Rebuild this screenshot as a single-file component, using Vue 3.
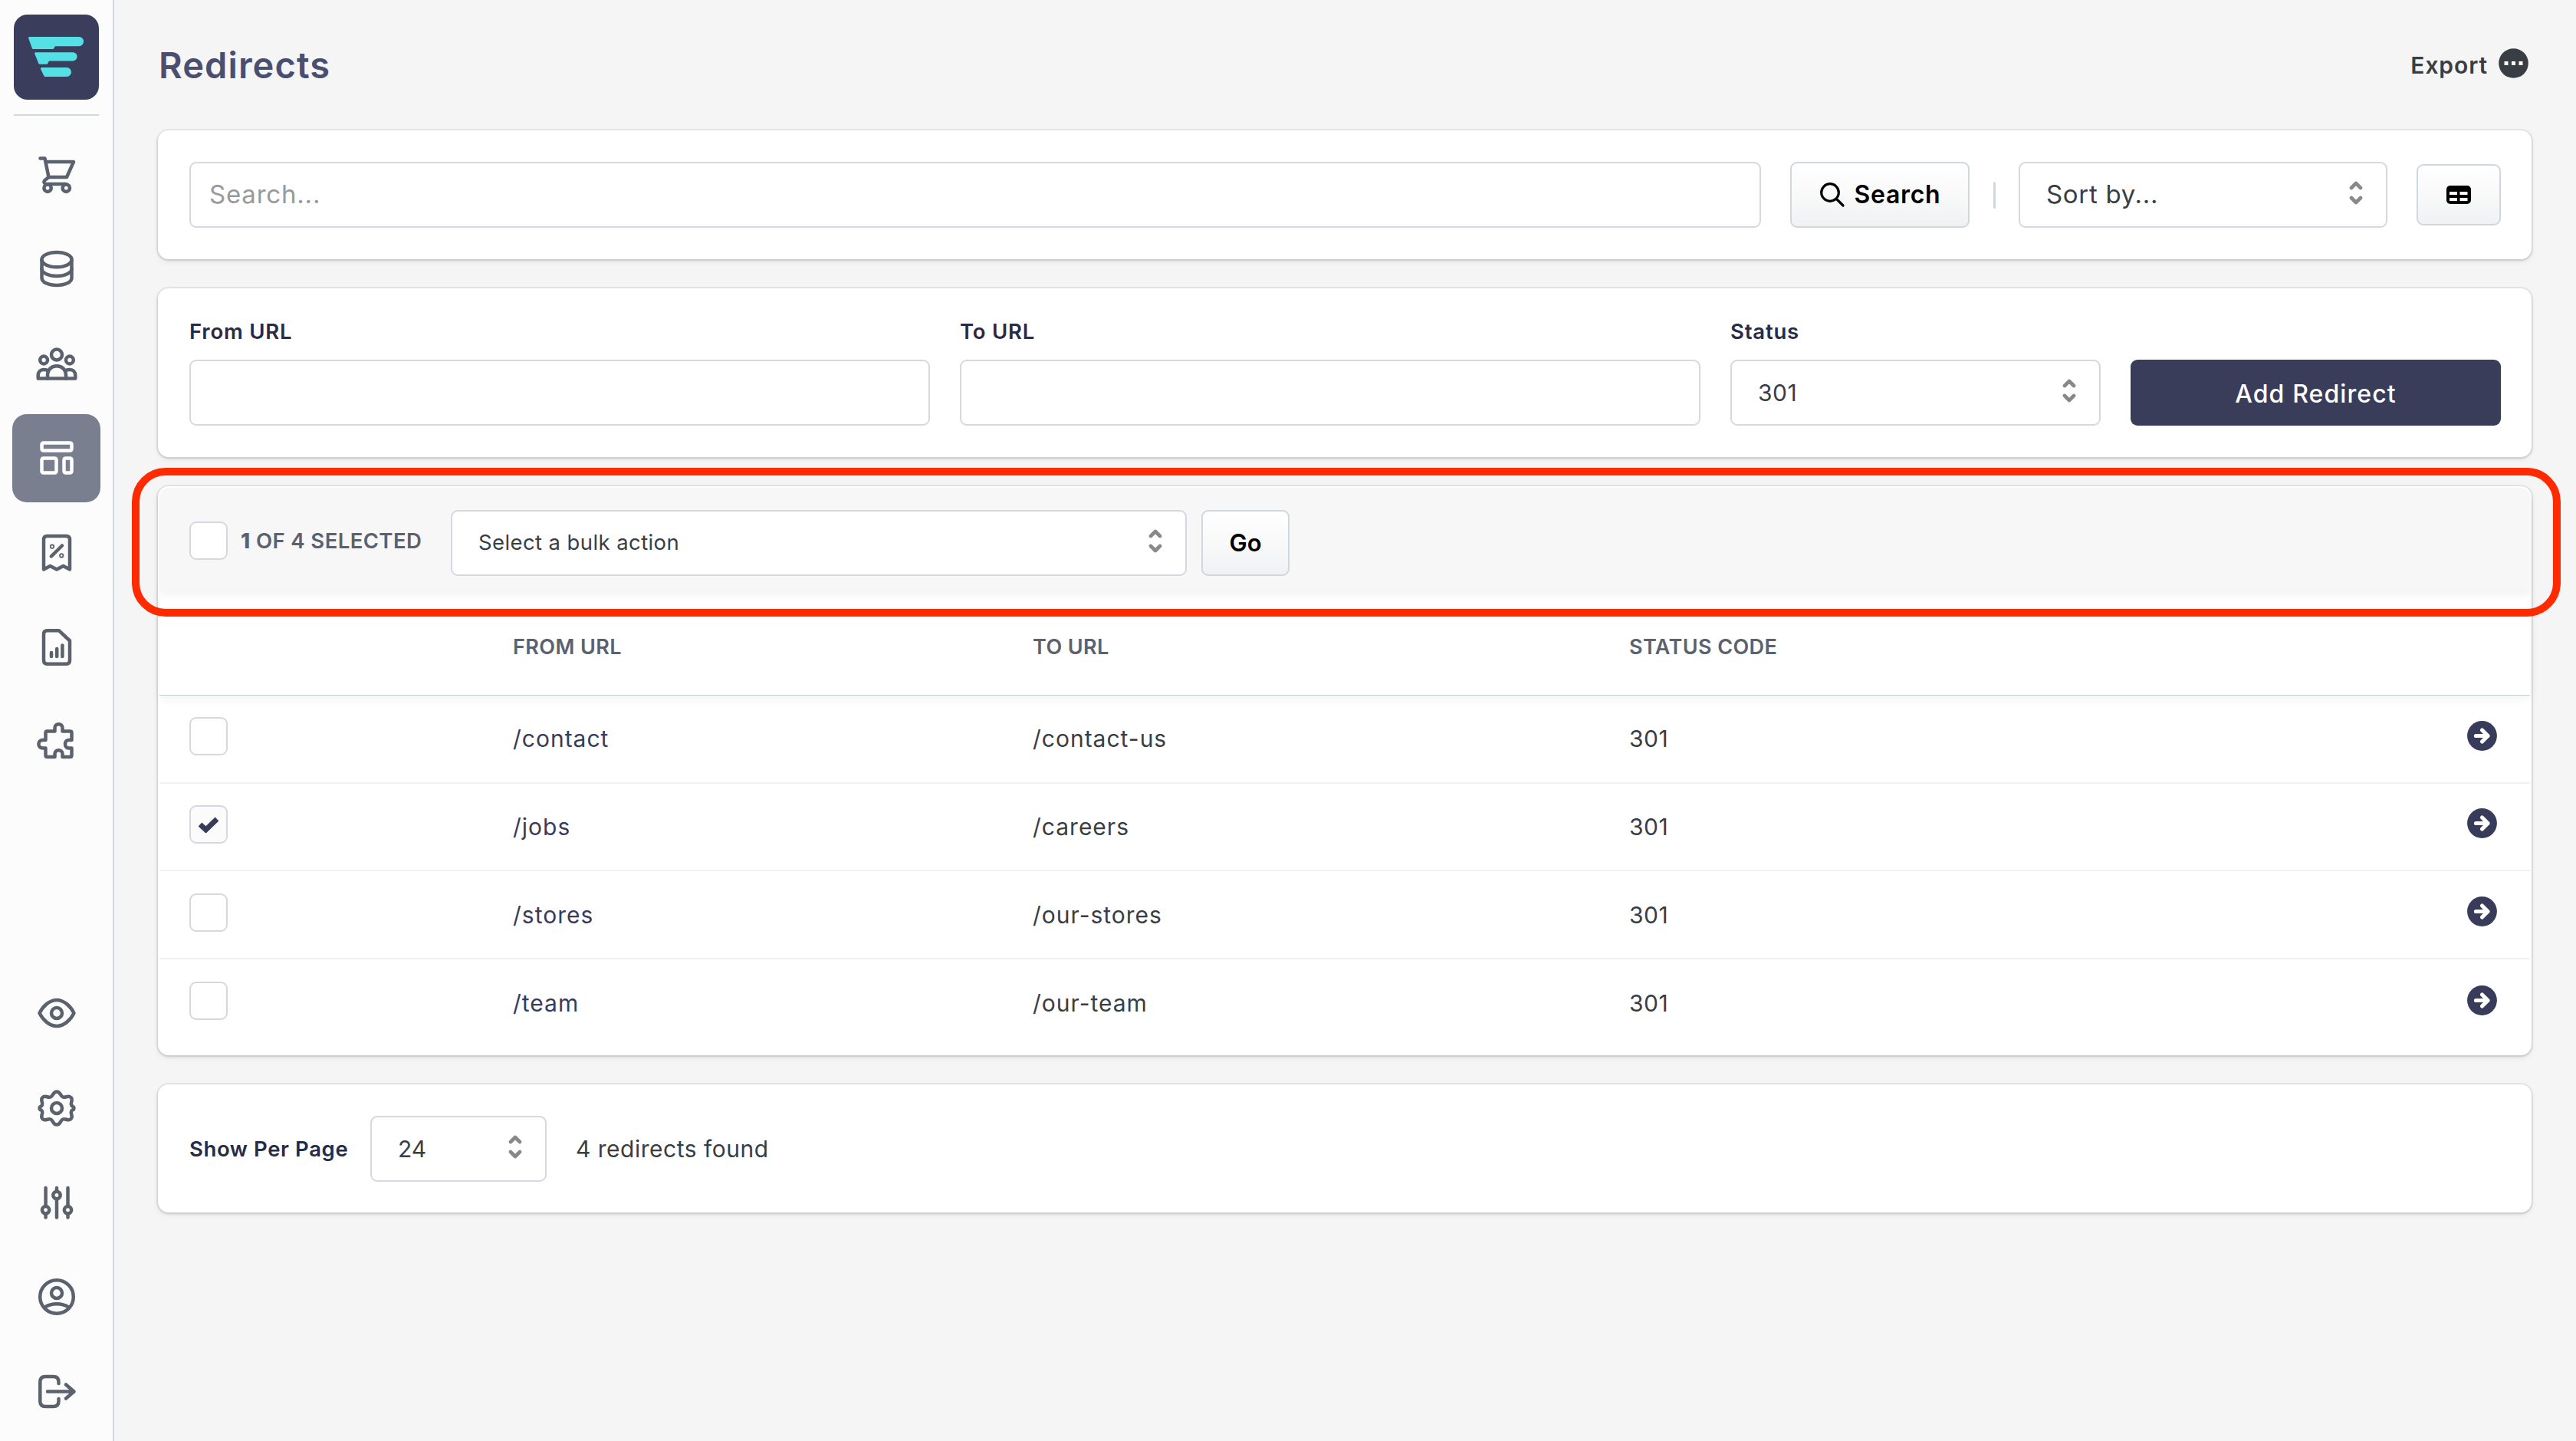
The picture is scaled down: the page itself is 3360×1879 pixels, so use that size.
<template>
  <div class="app">
    <aside class="sidebar">
      <div class="logo">
        <svg viewBox="0 0 111 111" fill="#55e0e5">
          <path d="M20.500 29H85a6 6 0 0 1 0 12.200H54l-2.500 3.800H25.500a2 2 0 0 1-1.600-1L19.200 31a1.400 1.400 0 0 1 1.300-2Z" />
          <path d="M28.500 49.200H77a5.600 5.600 0 0 1 0 11.200H46l-2.300 4.400H34a2 2 0 0 1-1.700-1.100L27.200 51a1.300 1.300 0 0 1 1.300-1.800Z" />
          <path d="M36.500 69H69a6 6 0 0 1 0 12H41a2 2 0 0 1-1.800-1.200L35.100 71a1.400 1.400 0 0 1 1.400-2Z" />
        </svg>
      </div>
      <nav class="nav">
        <a
          v-for="item in mainNav"
          :key="item.name"
          class="nav-item"
          :class="{ active: item.name === activeNav }"
        >
          <svg viewBox="0 0 60 60">
            <path v-for="(d, i) in item.paths" :key="i" :d="d" />
          </svg>
        </a>
      </nav>
      <nav class="nav nav-bottom">
        <a v-for="item in bottomNav" :key="item.name" class="nav-item">
          <svg viewBox="0 0 60 60">
            <path v-for="(d, i) in item.paths" :key="i" :d="d" />
          </svg>
        </a>
      </nav>
    </aside>

    <main class="content">
      <header class="page-header">
        <h1>Redirects</h1>
        <div class="export">
          <span>Export</span>
          <svg viewBox="0 0 39 39">
            <circle cx="19.500" cy="19.500" r="19.300" fill="#383e43" />
            <path d="M7.500 17h5v5h-5zM17 17h5v5h-5zM26.500 17h5v5h-5z" fill="#fff" />
          </svg>
        </div>
      </header>

      <section class="card search-card">
        <div class="field search-field">Search...</div>
        <div class="btn btn-search">
          <svg viewBox="0 0 34 34">
            <circle cx="14" cy="14" r="11.300" />
            <path d="M22.500 22.500 31 31" />
          </svg>
          <span>Search</span>
        </div>
        <i class="divider"></i>
        <div class="field select sort-select">
          <span>Sort by...</span>
          <svg class="chevrons" viewBox="0 0 18 31"><path :d="chevrons" /></svg>
        </div>
        <div class="btn btn-columns">
          <svg viewBox="0 0 32 24">
            <rect width="32" height="24" rx="5" />
            <path d="M4 8h10v4H4zM17.500 8h10v4h-10zM4 16h10v4H4zM17.500 16h10v4h-10z" fill="#fff" />
          </svg>
        </div>
      </section>

      <section class="card add-card">
        <div class="form-group">
          <label>From URL</label>
          <div class="field"></div>
        </div>
        <div class="form-group">
          <label>To URL</label>
          <div class="field"></div>
        </div>
        <div class="form-group">
          <label>Status</label>
          <div class="field select status-select">
            <span>301</span>
            <svg class="chevrons" viewBox="0 0 18 31"><path :d="chevrons" /></svg>
          </div>
        </div>
        <div class="btn-primary">Add Redirect</div>
      </section>

      <section class="card table-card">
        <div class="bulk-bar">
          <span class="checkbox"></span>
          <span class="bulk-count"><b>{{ selectedCount }}</b> of {{ redirects.length }} selected</span>
          <div class="field select bulk-select">
            <span>Select a bulk action</span>
            <svg class="chevrons" viewBox="0 0 18 31"><path :d="chevrons" /></svg>
          </div>
          <div class="btn btn-go">Go</div>
        </div>
        <div class="row head">
          <span></span>
          <span>From URL</span>
          <span>To URL</span>
          <span>Status Code</span>
        </div>
        <div v-for="item in redirects" :key="item.from" class="row">
          <span class="checkbox" :class="{ checked: item.selected }">
            <svg v-if="item.selected" viewBox="0 0 28 22">
              <path d="M3 11 10.500 18 25 4" />
            </svg>
          </span>
          <span class="url from">{{ item.from }}</span>
          <span class="url">{{ item.to }}</span>
          <span>{{ item.status }}</span>
          <svg class="go-arrow" viewBox="0 0 39 39">
            <circle cx="19.500" cy="19.500" r="19.400" fill="#383c5a" />
            <path d="M11.500 19.500H27M19.500 12l7.500 7.500-7.500 7.500" />
          </svg>
        </div>
        <div class="highlight"></div>
      </section>

      <section class="card footer-card">
        <label>Show Per Page</label>
        <div class="field select page-select">
          <span>24</span>
          <svg class="chevrons" viewBox="0 0 18 31"><path :d="chevrons" /></svg>
        </div>
        <span class="found">{{ redirects.length }} redirects found</span>
      </section>
    </main>
  </div>
</template>

<script setup>
import { computed, ref } from 'vue'

const activeNav = 'content'
const chevrons = 'M3 9 9 3l6 6M3 22l6 6 6-6'

const redirects = ref([
  { from: '/contact', to: '/contact-us', status: 301, selected: false },
  { from: '/jobs', to: '/careers', status: 301, selected: true },
  { from: '/stores', to: '/our-stores', status: 301, selected: false },
  { from: '/team', to: '/our-team', status: 301, selected: false }
])

const selectedCount = computed(() => redirects.value.filter((r) => r.selected).length)

const mainNav = [
  {
    name: 'orders',
    paths: [
      'M8.500 8.500h6L19.500 33H43L52 13H16',
      'M19.500 33l-5.500 4.500c-1.500 2 0 4.500 2.500 4.500H42',
      'M22.800 47.200a4.700 4.700 0 1 1-9.400 0 4.700 4.700 0 0 1 9.400 0Z',
      'M47 47.200a4.700 4.700 0 1 1-9.400 0 4.700 4.700 0 0 1 9.400 0Z'
    ]
  },
  {
    name: 'catalog',
    paths: [
      'M49.500 17.500c0 5.500-8.700 9.700-19.500 9.700s-19.500-4.200-19.500-9.700S19.200 8 30 8s19.500 4 19.500 9.500Z',
      'M10.500 17.500v24C10.500 47 19.200 51 30 51s19.500-4 19.500-9.500v-24',
      'M10.500 29.500c0 5.300 8.700 9.500 19.500 9.500s19.500-4.200 19.500-9.500'
    ]
  },
  {
    name: 'customers',
    paths: [
      'M37 18.500a7 7 0 1 1-14 0 7 7 0 0 1 14 0Z',
      'M18 25.500a4.900 4.900 0 1 1-9.800 0 4.900 4.900 0 0 1 9.800 0Z',
      'M51.800 25.500a4.900 4.900 0 1 1-9.800 0 4.900 4.900 0 0 1 9.800 0Z',
      'M18 49.500V46c0-8 5-12.700 12-12.700S42 38 42 46v3.500',
      'M18.500 39.500c-1-1-3-1.500-5.500-1.500-4.500 0-7.300 3-7.300 7.500v4h48.600v-4c0-4.500-2.800-7.500-7.300-7.500-2.500 0-4.500.5-5.500 1.500'
    ]
  },
  {
    name: 'content',
    paths: [
      'M13 10.500h34q2.500 0 2.500 2.500v5q0 2.500-2.500 2.500H13q-2.500 0-2.500-2.500v-5q0-2.500 2.500-2.500Z',
      'M13 30.500h14q2.500 0 2.500 2.500v14q0 2.500-2.500 2.500H13q-2.500 0-2.500-2.500V33q0-2.500 2.500-2.500Z',
      'M42 30.500h5q2.500 0 2.500 2.500v14q0 2.500-2.500 2.500h-5q-2.500 0-2.500-2.500V33q0-2.500 2.500-2.500Z'
    ]
  },
  {
    name: 'discounts',
    paths: [
      'M13 51.500V12.500q0-4.500 4.500-4.500h25q4.500 0 4.500 4.500v39l-8.500-4.500-8.500 4.500-8.500-4.500Z',
      'M22.800 34.500 37 20.500',
      'M24.900 21.700a.9.9 0 1 1-1.800 0 .9.9 0 0 1 1.800 0Z',
      'M37.100 33.500a.9.9 0 1 1-1.800 0 .9.9 0 0 1 1.800 0Z'
    ]
  },
  {
    name: 'reports',
    paths: [
      'M17.500 8.300H33L47 21.500V47q0 4.800-4.500 4.800h-25Q13 51.800 13 47V13q0-4.700 4.500-4.700Z',
      'M23 37v5',
      'M30.200 32v10',
      'M37.400 27.500V42'
    ]
  },
  {
    name: 'apps',
    paths: [
      'M15.500 18.500q0-2 2-2H27.500V12c0-6.500 10-6.500 10 0v4.500H47.500q2 0 2 2V28h-4c-6 0-6 10.500 0 10.500h4V48q0 2-2 2H37.500v-4c0-6.500-10-6.500-10 0v4h-10q-2 0-2-2v-9.500H12c-7.500 0-7.500-10.500 0-10.500h3.500Z'
    ]
  }
]

const bottomNav = [
  {
    name: 'view',
    paths: [
      'M7.500 30C12 21 20.500 13 30 13s18 8 22.500 17C48 39 39.500 47 30 47S12 39 7.500 30Z',
      'M37 30a7 7 0 1 1-14 0 7 7 0 0 1 14 0Z'
    ]
  },
  {
    name: 'settings',
    paths: [
      'M30 8.500c5 0 4.500 5.700 8 7 3.500 1.500 7-3 10.500.5s-1 6.500.5 9.800c1.300 3 3.500 1.200 3.500 4.200s-2.200 1.200-3.500 4.200c-1.500 3.300 3 6.300-.5 9.800s-7-1-10.500.5c-3.500 1.300-3 7-8 7s-4.500-5.700-8-7c-3.500-1.500-7 3-10.500-.5s1-6.500-.5-9.800c-1.300-3-3.500-1.200-3.500-4.200s2.200-1.200 3.500-4.200c1.500-3.300-3-6.300.5-9.800s7 1 10.500-.5c3.500-1.300 3-7 8-7Z',
      'M37 30a7 7 0 1 1-14 0 7 7 0 0 1 14 0Z'
    ]
  },
  {
    name: 'preferences',
    paths: [
      'M15.600 11v23M15.600 45v4.500',
      'M30 11v4M30 25.500v24',
      'M44.500 11v23M44.500 45v4.500',
      'M20.300 39.800a4.700 4.700 0 1 1-9.400 0 4.700 4.700 0 0 1 9.400 0Z',
      'M34.700 20.500a4.700 4.700 0 1 1-9.400 0 4.700 4.700 0 0 1 9.400 0Z',
      'M49.200 39.800a4.700 4.700 0 1 1-9.400 0 4.700 4.700 0 0 1 9.400 0Z'
    ]
  },
  {
    name: 'account',
    paths: [
      'M51.800 30a21.800 21.800 0 1 1-43.600 0 21.800 21.800 0 0 1 43.600 0Z',
      'M37 25a7 7 0 1 1-14 0 7 7 0 0 1 14 0Z',
      'M14.500 43.500c8.500-5.700 22.500-5.700 31 0'
    ]
  },
  {
    name: 'logout',
    paths: [
      'M32.500 19v-2q0-7-7-7H15.300q-7 0-7 7v25q0 7 7 7h10.200q7 0 7-7v-3',
      'M18 29.500h34M42 20.500l10.500 9L42 38.500'
    ]
  }
]
</script>

<style>
body {
  background: #f5f5f5;
}
</style>

<style scoped>
.app {
  box-sizing: border-box;
  display: flex;
  width: 3360px;
  height: 1879px;
  overflow: hidden;
  background: #f5f5f5;
  color: #383e43;
  font-family: Inter, "Liberation Sans", sans-serif;
  font-size: 30px;
}

.app * {
  box-sizing: border-box;
}

/* sidebar */
.sidebar {
  display: flex;
  flex-direction: column;
  width: 149px;
  flex: none;
  background: #fcfcfc;
  border-right: 2px solid #d1d7dc;
}

.logo {
  height: 132px;
  margin: 19px 18px 0 18px;
  border-bottom: 2px solid #d1d7dc;
}

.logo svg {
  display: block;
  width: 111px;
  height: 111px;
  border-radius: 18px;
  background: #3a3d5b;
}

.nav {
  display: flex;
  flex-direction: column;
  gap: 8.3px;
  margin: 19px 0 0 16px;
}

.nav-bottom {
  margin-top: auto;
  margin-bottom: 7px;
}

.nav-item {
  display: flex;
  align-items: center;
  justify-content: center;
  width: 115px;
  height: 115px;
  border-radius: 19px;
}

.nav-item svg {
  width: 60px;
  height: 60px;
  fill: none;
  stroke: #5b626d;
  stroke-width: 4.5;
  stroke-linecap: round;
  stroke-linejoin: round;
}

.nav-item.active {
  background: #7a7f8f;
}

.nav-item.active svg {
  stroke: #fff;
}

/* page */
.content {
  flex: 1;
  padding: 0 58px 0 57px;
}

.page-header {
  display: flex;
  align-items: center;
  justify-content: space-between;
  height: 170px;
  padding-right: 4px;
}

h1 {
  margin: 0 0 1px 1px;
  font-size: 47px;
  font-weight: 600;
  letter-spacing: 1.1px;
  color: #4a4f70;
}

.export {
  display: flex;
  align-items: center;
  gap: 14px;
  font-weight: 600;
  letter-spacing: 0.9px;
}

.export svg {
  width: 39px;
  height: 39px;
  margin-bottom: 6px;
}

.card {
  margin-bottom: 38px;
  border-radius: 14px;
  background: #fff;
  box-shadow: 0 0 0 2px rgba(0, 0, 0, 0.06), 0 2px 3px 1px rgba(0, 0, 0, 0.07), 0 3px 10px rgba(0, 0, 0, 0.06);
}

.field {
  display: flex;
  align-items: center;
  height: 86px;
  border: 2px solid #d5d8e3;
  border-radius: 9px;
  background: #fff;
}

.select {
  justify-content: space-between;
  padding: 0 30px 0 34px;
}

.chevrons {
  width: 18px;
  height: 31px;
  margin-bottom: 5px;
  fill: none;
  stroke: #888;
  stroke-width: 4.6;
  stroke-linecap: round;
  stroke-linejoin: round;
}

.btn {
  display: flex;
  align-items: center;
  justify-content: center;
  height: 86px;
  border: 2px solid #d1d7da;
  border-radius: 9px;
  background: linear-gradient(#fff, #f9f9f9 50%, #eff1f3);
  color: #000;
  font-weight: 600;
}

.search-card {
  display: flex;
  align-items: center;
  height: 168px;
  padding: 0 40px 0 41px;
}

.search-field {
  flex: 1;
  padding: 0 0 2px 24px;
  font-size: 33px;
  letter-spacing: 0.8px;
  color: #999;
}

.btn-search {
  gap: 12px;
  width: 234px;
  margin-left: 38px;
  padding-bottom: 1px;
  font-size: 32px;
  letter-spacing: 0.7px;
}

.btn-search svg {
  width: 34px;
  height: 34px;
  fill: none;
  stroke: #000;
  stroke-width: 3.2;
  stroke-linecap: round;
}

.divider {
  width: 3px;
  height: 35px;
  margin: 0 30px 0 31px;
  border-radius: 2px;
  background: #d1d7dc;
}

.sort-select {
  width: 481px;
  font-size: 33px;
  letter-spacing: 0.7px;
}

.sort-select span {
  padding-bottom: 2px;
}

.btn-columns {
  width: 110px;
  height: 80px;
  margin-left: 38px;
}

.btn-columns svg {
  width: 32px;
  height: 24px;
}

.add-card {
  display: grid;
  grid-template-columns: 2fr 2fr 1fr 1fr;
  gap: 39px;
  align-items: end;
  height: 220px;
  padding: 0 40px 41px 41px;
}

label {
  font-size: 27.5px;
  font-weight: 600;
  letter-spacing: 0.6px;
  color: #282b45;
}

.form-group {
  display: flex;
  flex-direction: column;
  gap: 20px;
}

.form-group label {
  line-height: 34px;
  letter-spacing: 0.8px;
}

.status-select {
  letter-spacing: 0.5px;
}

.btn-primary {
  display: flex;
  align-items: center;
  justify-content: center;
  height: 86px;
  padding-top: 2px;
  border-radius: 9px;
  background: #393d5a;
  color: #fff;
  font-size: 32px;
  font-weight: 500;
  letter-spacing: 1.1px;
}

/* table */
.table-card {
  position: relative;
  height: 742px;
  padding: 2px;
}

.bulk-bar {
  display: flex;
  align-items: center;
  height: 135px;
  padding: 8px 0 0 39px;
  border-radius: 14px 14px 0 0;
  background: #f7f7f7;
  box-shadow: 0 5px 12px rgba(0, 0, 0, 0.05);
}

.checkbox {
  display: flex;
  align-items: center;
  justify-content: center;
  width: 50px;
  height: 50px;
  margin-bottom: 6px;
  border: 2px solid #d5d8e3;
  border-radius: 9px;
  background: #fff;
}

.checkbox.checked {
  background: #fbfbfc;
}

.checkbox svg {
  width: 28px;
  height: 22px;
  fill: none;
  stroke: #383c5a;
  stroke-width: 6.8;
}

.bulk-count {
  width: 291px;
  padding-left: 17px;
  padding-bottom: 5px;
  font-size: 27.5px;
  font-weight: 600;
  letter-spacing: 0.4px;
  text-transform: uppercase;
  white-space: nowrap;
  color: #5b626d;
}

.bulk-count b {
  font-weight: 800;
}

.bulk-select {
  width: 960px;
  font-size: 27.5px;
  letter-spacing: 0.4px;
}

.bulk-select span {
  padding-bottom: 1px;
}

.btn-go {
  width: 115px;
  margin-left: 19px;
  font-size: 31px;
}

.row {
  display: grid;
  grid-template-columns: 422px 678px 778px 1fr 39px;
  align-items: center;
  height: 114.67px;
  padding: 0 43px 0 39px;
  border-bottom: 2px solid #eef2f5;
  letter-spacing: 0.5px;
}

.row:nth-last-child(2) {
  border-bottom: none;
}

.row.head {
  height: 136px;
  padding-bottom: 8px;
  padding-top: 17px;
  border-bottom: 1px solid #c4ccce;
  box-shadow: 0 5px 12px rgba(0, 0, 0, 0.05);
  font-size: 27px;
  font-weight: 600;
  letter-spacing: 0.4px;
  text-transform: uppercase;
  color: #5b626d;
}

.url {
  letter-spacing: 1px;
}

.from {
  color: #383c5a;
}

.go-arrow {
  width: 39px;
  height: 39px;
  margin-bottom: 8px;
  fill: none;
  stroke: #fff;
  stroke-width: 5.2;
  stroke-linecap: round;
  stroke-linejoin: round;
}

.go-arrow circle {
  stroke: none;
}

/* frame drawn over the bulk actions */
.highlight {
  position: absolute;
  top: -24px;
  left: -34px;
  right: -38px;
  height: 194px;
  border: 10px solid #ff2a00;
  border-radius: 44px;
}

.footer-card {
  display: flex;
  align-items: center;
  height: 167px;
  margin-bottom: 0;
  padding-left: 41px;
}

.footer-card label {
  width: 236px;
}

.page-select {
  width: 230px;
}

.found {
  margin-left: 38px;
  letter-spacing: 0.5px;
}
</style>
